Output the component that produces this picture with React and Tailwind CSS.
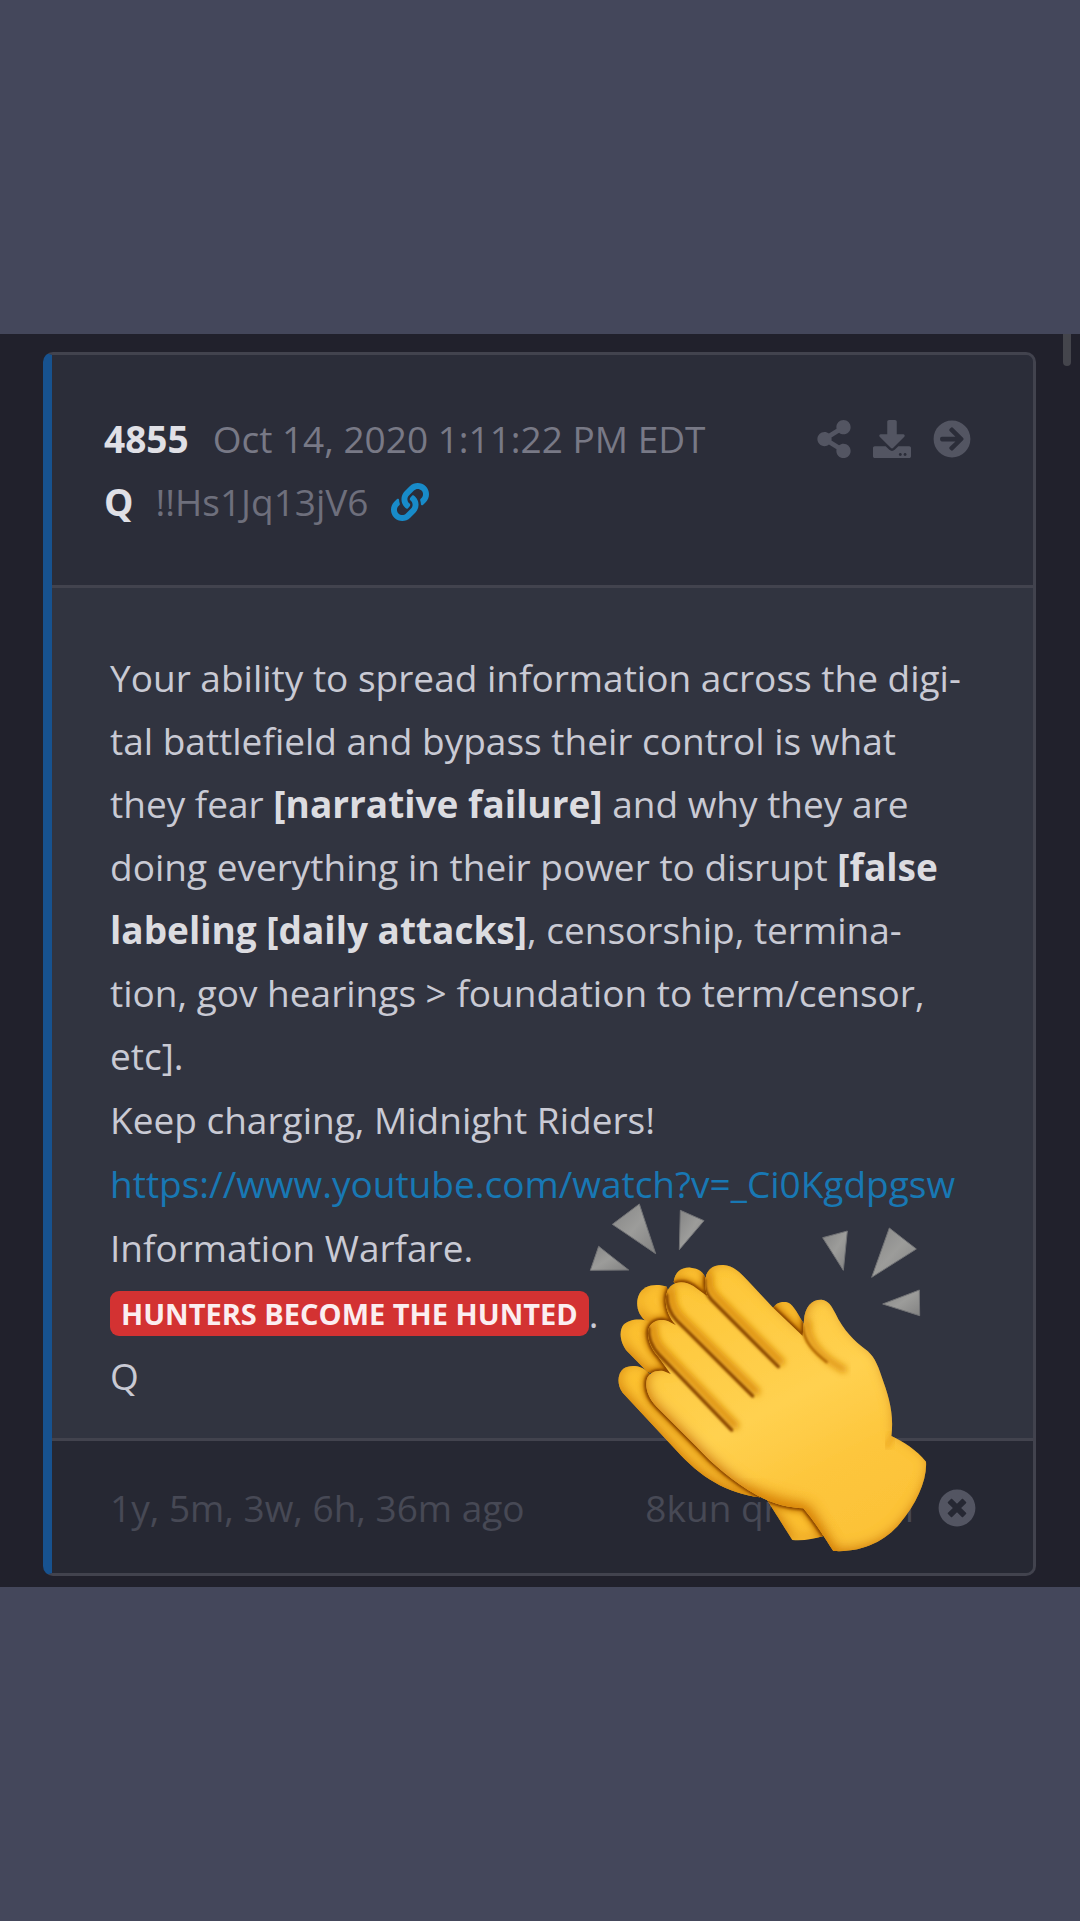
import { FaArrowCircleRight, FaDownload, FaLink, FaShareAlt, FaTimesCircle } from "react-icons/fa";

const sparks = [
  "M238 72 L157 133 L287 221 Z",
  "M361 91 L432 122 L358 209 Z",
  "M116 199 L91 271 L206 270 Z",
  "M788 173 L862 153 L850 271 Z",
  "M988 144 L1069 207 L935 292 Z",
  "M1078 330 L1079 407 L968 372 Z",
];

// finger gaps on the front hand: dark line, and the shaded underside of the finger above it
const creases = [
  { line: "M434 300 C432 325 438 342 455 360 L655 560", shade: "M446 290 C446 325 455 340 470 352 L662 545" },
  { line: "M320 345 C320 375 330 400 350 421 L578 648", shade: "M334 335 C334 370 345 395 364 412 L588 634" },
  { line: "M266 445 C264 475 275 500 297 524 L515 750", shade: "M280 440 C280 475 292 496 312 514 L525 736" },
];

const frontHand =
  "M436 312 C434 272 455 254 490 255 C520 257 540 276 565 304 L640 384 L728 468 L732 420 C735 380 755 358 785 359 C805 361 815 378 826 400 C850 452 885 485 915 507 C940 525 952 550 965 590 C985 645 1003 700 994 768 C1030 785 1070 810 1098 845 C1102 900 1070 970 1020 1030 C975 1085 905 1118 820 1113 C795 1075 765 1025 730 985 C690 983 645 975 590 945 C520 905 460 855 410 800 L290 680 C265 655 255 625 260 600 C265 580 285 570 310 573 L332 582 L295 530 C270 505 258 465 267 443 C277 420 305 415 325 424 L348 436 C322 408 312 370 320 340 C330 303 370 298 400 318 L446 352 C438 342 437 330 436 312 Z";

const backHand = [
  "M612 945 L697 1080 C730 1083 760 1077 790 1068 L740 960 Z",
  "M636 390 C645 370 660 364 678 366 C698 370 708 392 730 430 L736 500 Z",
  "M341 306 C345 275 365 261 392 263 C415 265 432 275 438 300 L450 370 L380 340 Z",
  "M320 320 C300 313 275 313 258 322 C235 335 228 360 233 385 C238 408 255 425 280 440 L350 440 Z",
  "M266 424 C240 413 205 418 190 435 C175 455 182 490 200 512 L262 575 L330 600 L330 530 Z",
  "M262 576 C245 556 210 553 190 566 C172 580 170 615 188 638 L350 812 C420 890 500 940 600 952 L620 920 L300 610 Z",
];

function ClappingHands({ className }) {
  return (
    <svg viewBox="0 0 1200 1200" className={className} role="img" aria-label="Clapping hands">
      <defs>
        <linearGradient id="skin" x1="0.2" y1="0" x2="0.7" y2="1">
          <stop offset="0" stopColor="#fdc536" />
          <stop offset="0.5" stopColor="#ffd150" />
          <stop offset="0.75" stopColor="#fdc63c" />
          <stop offset="1" stopColor="#fcc238" />
        </linearGradient>
        <linearGradient id="skinBack" x1="0" y1="0" x2="1" y2="1">
          <stop offset="0" stopColor="#fdc233" />
          <stop offset="1" stopColor="#fbbd30" />
        </linearGradient>
        <linearGradient id="spark" x1="0" y1="0" x2="1" y2="1">
          <stop offset="0" stopColor="#858585" />
          <stop offset="0.5" stopColor="#9c9c9a" />
          <stop offset="1" stopColor="#828282" />
        </linearGradient>
        <filter id="rim" x="-5%" y="-5%" width="110%" height="110%">
          <feComponentTransfer in="SourceAlpha" result="inverse">
            <feFuncA type="linear" slope="-1" intercept="1" />
          </feComponentTransfer>
          <feGaussianBlur in="inverse" stdDeviation="17" result="blurred" />
          <feOffset in="blurred" dx="5" dy="-8" result="shifted" />
          <feFlood floodColor="#d27c00" />
          <feComposite in2="shifted" operator="in" />
          <feComposite in2="SourceAlpha" operator="in" result="shade" />
          <feMerge>
            <feMergeNode in="SourceGraphic" />
            <feMergeNode in="shade" />
          </feMerge>
        </filter>
        <filter id="wide" x="-30%" y="-30%" width="160%" height="160%">
          <feGaussianBlur stdDeviation="22" />
        </filter>
        <filter id="soft" x="-20%" y="-20%" width="140%" height="140%">
          <feGaussianBlur stdDeviation="9" />
        </filter>
        <filter id="fine" x="-20%" y="-20%" width="140%" height="140%">
          <feGaussianBlur stdDeviation="3" />
        </filter>
        <clipPath id="front">
          <path d={frontHand} />
        </clipPath>
        <clipPath id="back">
          {backHand.map((d) => (
            <path key={d} d={d} />
          ))}
        </clipPath>
      </defs>

      <g fill="url(#spark)" stroke="#727376" strokeWidth="3">
        {sparks.map((d) => (
          <path key={d} d={d} />
        ))}
      </g>

      <g fill="url(#skinBack)">
        {backHand.map((d) => (
          <path key={d} d={d} filter="url(#rim)" />
        ))}
      </g>

      {/* shadow that the front hand throws on the back hand */}
      <g clipPath="url(#back)" fill="none">
        <path d={frontHand} stroke="#c97a06" strokeWidth="22" filter="url(#soft)" />
        <path d={frontHand} stroke="#8e4a00" strokeWidth="13" filter="url(#fine)" />
      </g>

      <path d={frontHand} fill="url(#skin)" filter="url(#rim)" />
      <g clipPath="url(#front)" fill="none" strokeLinecap="round">
        <path d="M560 950 L730 1000 L800 1130" stroke="#d98300" strokeWidth="50" opacity="0.8" filter="url(#wide)" />
        <path
          d="M742 430 C742 480 780 530 850 568"
          stroke="#dc8f0c"
          strokeWidth="22"
          opacity="0.85"
          filter="url(#soft)"
        />
        <path d="M728 440 C732 485 760 515 800 546" stroke="#b06503" strokeWidth="8" filter="url(#fine)" />
        <path d="M1000 762 L980 800" stroke="#e9a31c" strokeWidth="14" filter="url(#soft)" />
        {creases.map(({ line, shade }) => (
          <g key={line}>
            <path d={shade} stroke="#dd910c" strokeWidth="24" filter="url(#soft)" />
            <path d={line} stroke="#8a4600" strokeWidth="10" filter="url(#fine)" />
          </g>
        ))}
      </g>
    </svg>
  );
}

export default function App() {
  return (
    <div className="flex min-h-screen flex-col justify-center bg-[#44475b] font-['Open_Sans',sans-serif] text-[37px] leading-[63px]">
      <main className="relative bg-[#21212c] pt-[18px] pr-11 pb-[11px] pl-[43px]">
        <div className="absolute top-0 right-[9px] h-8 w-2 rounded-b-sm bg-[#44454c]" />

        <article className="relative rounded-[10px] border-[3px] border-l-[9px] border-[#42434e] border-l-[#17528f] bg-[#313440]">
          <header className="flex items-start justify-between rounded-tr-[7px] border-b-[3px] border-[#42434e] bg-[#2b2d39] py-[52px] pr-[62px] pl-[52px] text-[#787986]">
            <div>
              <div className="flex gap-6">
                <strong className="font-bold text-[#e0e0e6]">4855</strong>
                <time dateTime="2020-10-14T13:11:22-04:00">Oct 14, 2020 1:11:22 PM EDT</time>
              </div>
              <div className="flex items-center gap-[22px]">
                <strong className="font-bold text-[#e0e0e6]">Q</strong>
                <span className="text-[#6e6f7c]">!!Hs1Jq13jV6</span>
                <a href="#4855" aria-label="Permalink" className="text-[#188bc9]">
                  <FaLink className="size-[38px]" />
                </a>
              </div>
            </div>
            <div className="flex h-[63px] items-center gap-[22px] text-[#535562]">
              <button type="button" aria-label="Share">
                <FaShareAlt className="h-[38px] w-[34px]" />
              </button>
              <button type="button" aria-label="Download">
                <FaDownload className="size-[38px]" />
              </button>
              <button type="button" aria-label="Open">
                <FaArrowCircleRight className="size-[38px]" />
              </button>
            </div>
          </header>

          <div className="flex flex-col gap-px pt-[58px] pr-12 pb-[31px] pl-[58px] text-[#c9cad4]">
            <p>
              Your ability to spread information across the digi-
              <br />
              tal battlefield and bypass their control is what
              <br />
              they fear <strong className="font-bold text-[#dcdce0]">[narrative failure]</strong> and why they are
              <br />
              doing everything in their power to disrupt <strong className="font-bold text-[#dcdce0]">[false</strong>
              <br />
              <strong className="font-bold text-[#dcdce0]">labeling [daily attacks]</strong>, censorship, termina-
              <br />
              tion, gov hearings &gt; foundation to term/censor,
              <br />
              etc].
            </p>
            <p>Keep charging, Midnight Riders!</p>
            <p>
              <a href="https://www.youtube.com/watch?v=_Ci0Kgdpgsw" className="text-[#1878b4]">
                https://www.youtube.com/watch?v=_Ci0Kgdpgsw
              </a>
            </p>
            <p>Information Warfare.</p>
            <p className="flex h-[63px] items-center pt-1">
              <mark className="rounded-[9px] bg-[#d33232] px-[11px] text-[29px] leading-[45px] font-bold text-[#fbeef0]">
                HUNTERS BECOME THE HUNTED
              </mark>
              .
            </p>
            <p>Q</p>
          </div>

          <footer className="flex items-center justify-between rounded-br-[7px] border-t-[3px] border-[#42434e] bg-[#262833] pt-[35px] pr-[57px] pb-[34px] pl-[58px] text-[#474955]">
            <span>1y, 5m, 3w, 6h, 36m ago</span>
            <div className="flex items-center gap-6">
              <span>8kun qresearch</span>
              <button type="button" aria-label="Close" className="text-[#535562]">
                <FaTimesCircle className="size-[38px]" />
              </button>
            </div>
          </footer>

          <ClappingHands className="pointer-events-none absolute right-[73px] bottom-[-7px] size-[400px]" />
        </article>
      </main>
    </div>
  );
}
